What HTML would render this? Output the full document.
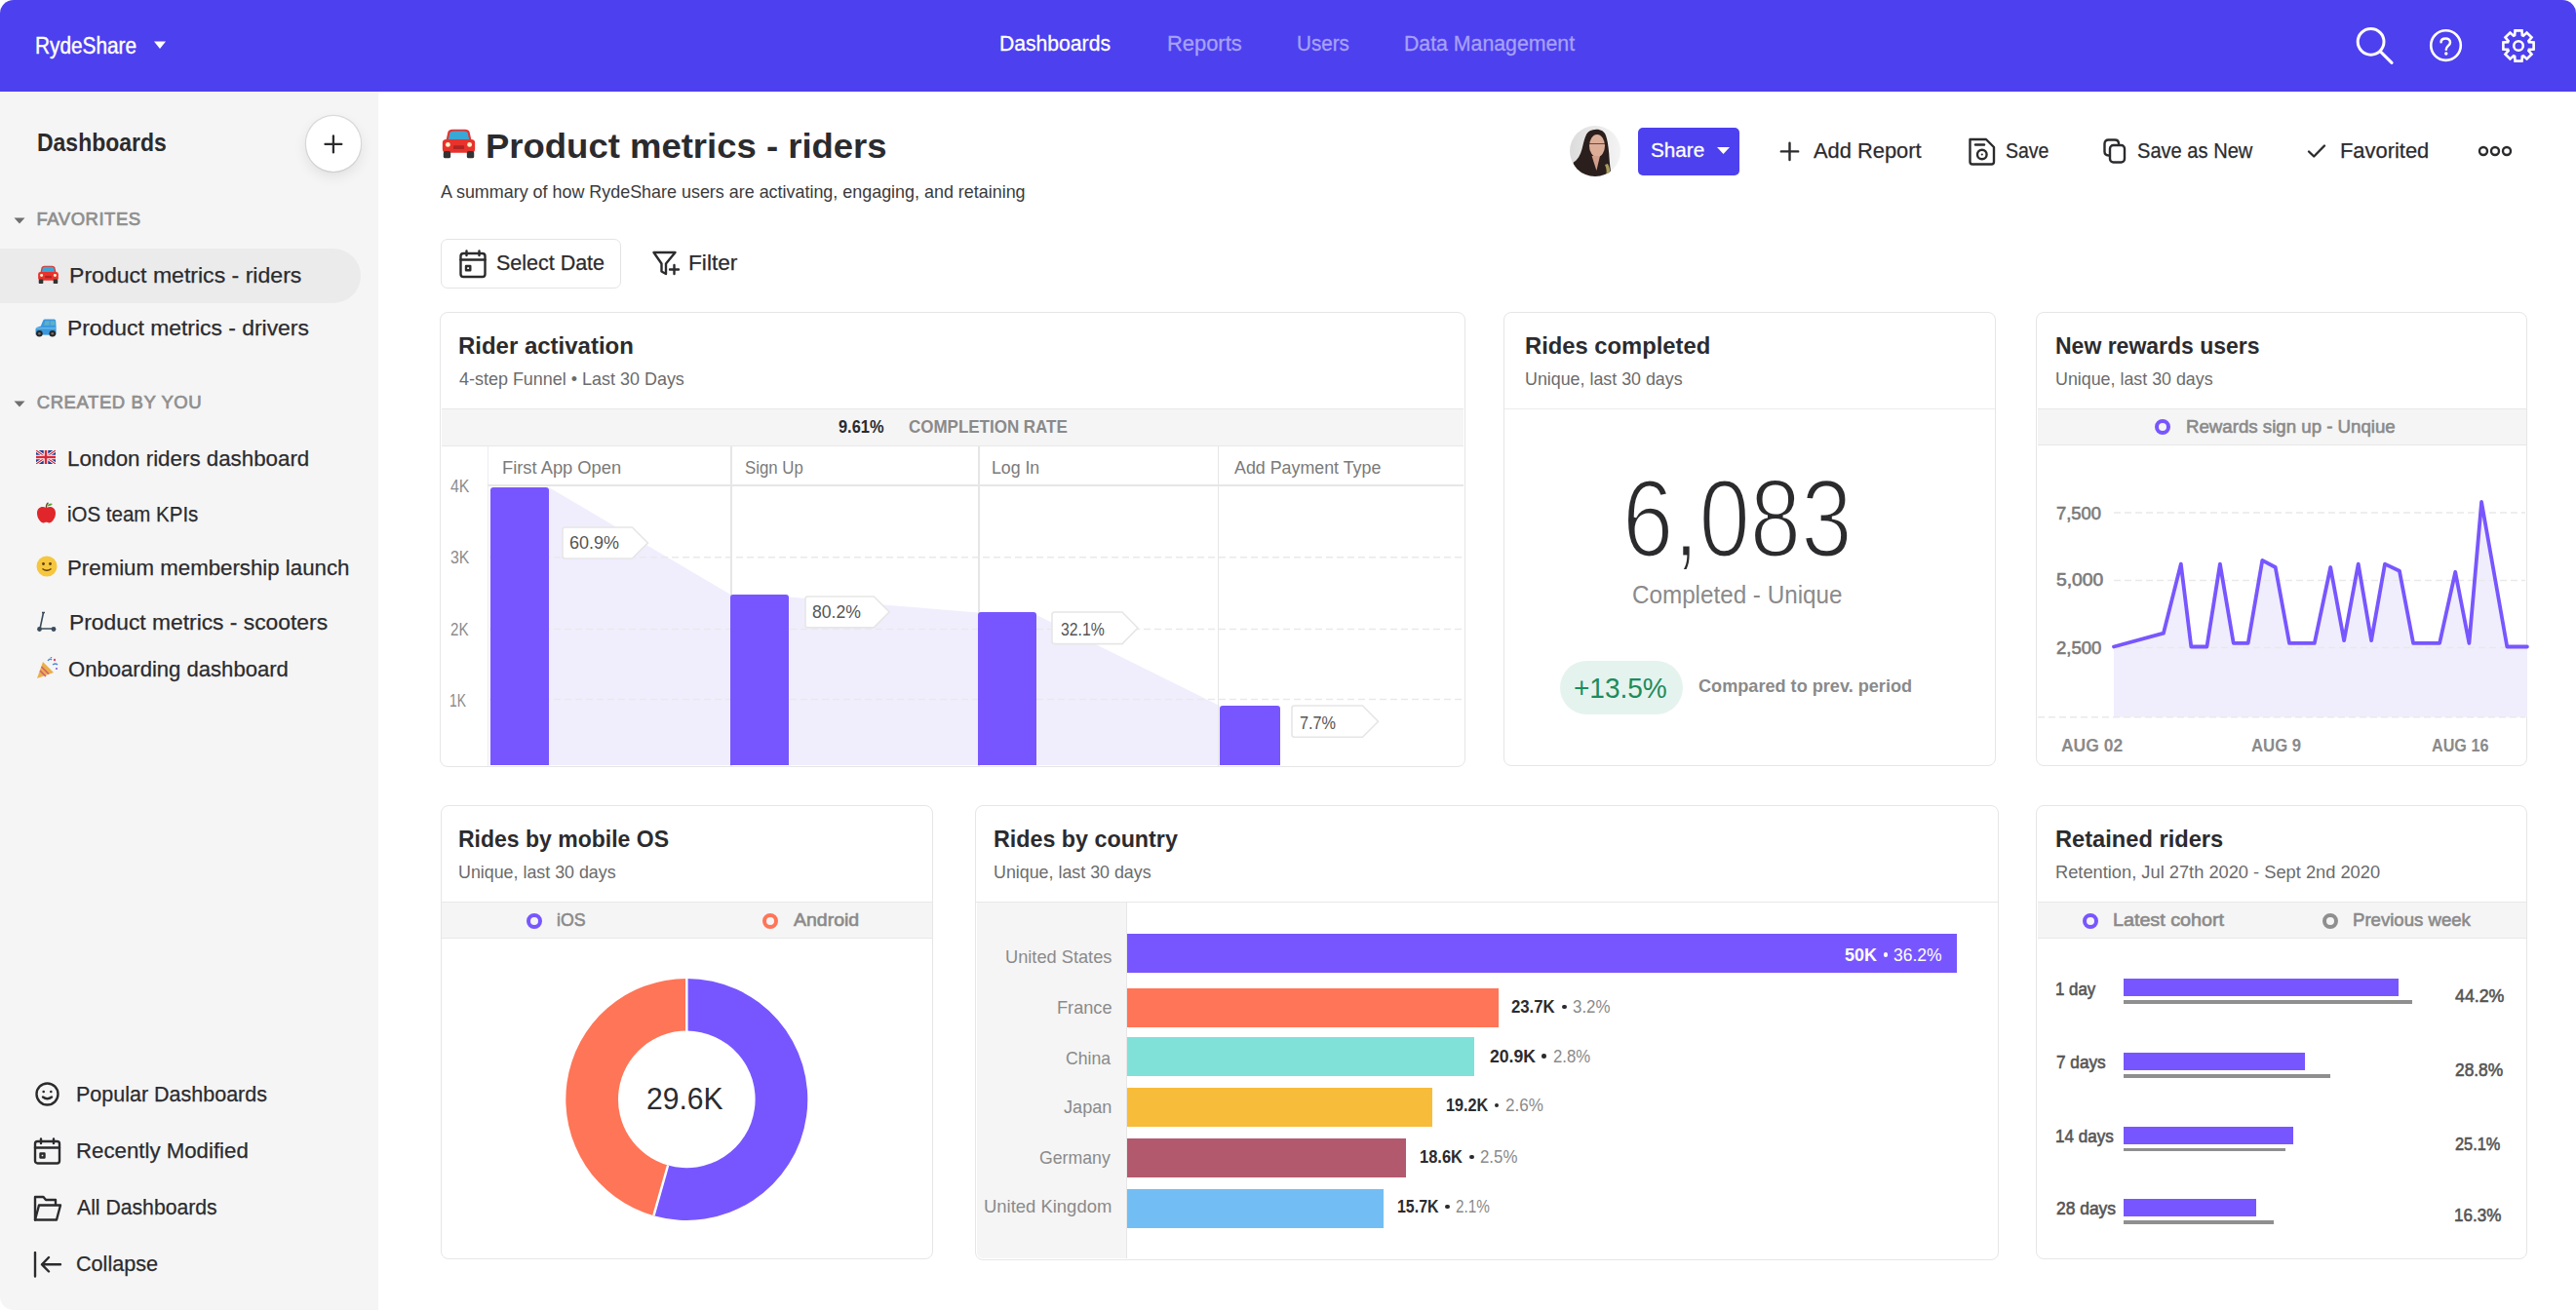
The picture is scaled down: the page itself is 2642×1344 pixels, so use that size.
<!DOCTYPE html>
<html><head><meta charset="utf-8"><style>
html,body{margin:0;padding:0;}
body{width:2642px;height:1344px;position:relative;overflow:hidden;background:#fff;font-family:"Liberation Sans",sans-serif;}
.t{position:absolute;white-space:pre;}
.a{position:absolute;}
</style></head><body>
<div class="a" style="left:0;top:0;width:2642px;height:93.5px;background:#4d40ef;border-radius:14px 14px 0 0;"></div><div class="a" style="left:0;top:93.5px;width:387.5px;height:1250.5px;background:#f5f5f5;border-radius:0 0 0 14px;"></div><svg class="a" style="left:157px;top:41px" width="14" height="10"><path d="M1 1.5 L13 1.5 L7 9 Z" fill="#fff"/></svg><svg class="a" style="left:2410px;top:22px" width="50" height="48" viewBox="0 0 50 48"><circle cx="21.6" cy="20.8" r="13.4" fill="none" stroke="#fff" stroke-width="3"/><line x1="31.4" y1="30.8" x2="43" y2="42.4" stroke="#fff" stroke-width="3.2" stroke-linecap="round"/></svg><svg class="a" style="left:2486px;top:27px" width="42" height="40" viewBox="0 0 42 40"><circle cx="22.5" cy="19.6" r="15.3" fill="none" stroke="#fff" stroke-width="2.6"/><path d="M17.6 16.2 C17.6 13.6 19.6 12.4 22.3 12.4 C25 12.4 27 14 27 16.4 C27 19.6 22.8 20.2 22.8 23.8" fill="none" stroke="#fff" stroke-width="2.5" stroke-linecap="round"/><circle cx="22.8" cy="28" r="1.7" fill="#fff"/></svg><svg class="a" style="left:2560px;top:24px" width="46" height="46" viewBox="0 0 46 46"><path d="M19.16 12.16 L19.51 7.39 L26.49 7.39 L26.84 12.16 L27.95 12.62 L31.57 9.49 L36.51 14.43 L33.38 18.05 L33.84 19.16 L38.61 19.51 L38.61 26.49 L33.84 26.84 L33.38 27.95 L36.51 31.57 L31.57 36.51 L27.95 33.38 L26.84 33.84 L26.49 38.61 L19.51 38.61 L19.16 33.84 L18.05 33.38 L14.43 36.51 L9.49 31.57 L12.62 27.95 L12.16 26.84 L7.39 26.49 L7.39 19.51 L12.16 19.16 L12.62 18.05 L9.49 14.43 L14.43 9.49 L18.05 12.62 Z" fill="none" stroke="#fff" stroke-width="2.6" stroke-linejoin="miter"/><circle cx="23" cy="23" r="4.8" fill="none" stroke="#fff" stroke-width="2.6"/></svg><div class="a" style="left:313.5px;top:119.3px;width:56.8px;height:56.8px;border-radius:50%;background:#fff;box-shadow:0 5px 14px rgba(0,0,0,0.09),0 0 0 1.2px rgba(0,0,0,0.09);"></div><svg class="a" style="left:332px;top:138px" width="20" height="20"><path d="M9.9 1.4 V18.4 M1.5 9.9 H18.3" stroke="#2b2b2e" stroke-width="2.3" stroke-linecap="round"/></svg><svg class="a" style="left:14px;top:223px" width="12" height="7"><path d="M0.5 0.5 H11.5 L6 6.5 Z" fill="#6f6f6f"/></svg><svg class="a" style="left:14px;top:411px" width="12" height="7"><path d="M0.5 0.5 H11.5 L6 6.5 Z" fill="#6f6f6f"/></svg><div class="a" style="left:0;top:254.7px;width:370px;height:56px;background:#ebebeb;border-radius:0 28px 28px 0;"></div><svg class="a" style="left:37.5px;top:271.5px" width="23" height="19.8" viewBox="0 0 40 34"><path d="M8 4 Q9 1 13 1 H27 Q31 1 32 4 L34 13 H6 Z" fill="#e8322c"/><path d="M10 5 Q11 3 14 3 H26 Q29 3 30 5 L31.5 12 H8.5 Z" fill="#39a8d6"/><rect x="2" y="12" width="36" height="15" rx="4" fill="#e8322c"/><rect x="3" y="25" width="8" height="8" rx="2" fill="#333"/><rect x="29" y="25" width="8" height="8" rx="2" fill="#333"/><circle cx="8" cy="18" r="2.6" fill="#fff6cc"/><circle cx="32" cy="18" r="2.6" fill="#fff6cc"/><rect x="14" y="19" width="12" height="4" rx="1" fill="#8a1c1c" opacity="0.6"/></svg><svg class="a" style="left:36px;top:326.5px" width="22" height="19" viewBox="0 0 22 19"><path d="M0.5 16.5 V11 Q0.5 9.3 2 8.8 L5.8 7.5 L8.2 1.8 Q8.7 0.5 10.2 0.5 H19.6 Q21 0.5 21.2 2 L21.6 8.5 V15.5 Q21.6 16.8 20.2 16.8 Z" fill="#3a98de"/><path d="M9 6.8 L10.4 2.2 H14.6 V6.8 Z M15.6 2.2 H20.2 L20.4 6.8 H15.6 Z" fill="#5fb0c8"/><path d="M1 9.8 H21" stroke="#7fd3f2" stroke-width="0.8"/><circle cx="4.4" cy="15.3" r="3.3" fill="#262626"/><circle cx="4.4" cy="15.3" r="1.3" fill="#7a7070"/><circle cx="17.8" cy="15.3" r="3.3" fill="#262626"/><circle cx="17.8" cy="15.3" r="1.3" fill="#7a7070"/></svg><svg class="a" style="left:37px;top:462px" width="20" height="14" viewBox="0 0 20 14"><rect width="20" height="14" rx="1.5" fill="#1f3f8f"/><path d="M0 0 L20 14 M20 0 L0 14" stroke="#fff" stroke-width="3"/><path d="M0 0 L20 14 M20 0 L0 14" stroke="#d8283a" stroke-width="1.2"/><path d="M10 0 V14 M0 7 H20" stroke="#fff" stroke-width="4.5"/><path d="M10 0 V14 M0 7 H20" stroke="#d8283a" stroke-width="2.5"/></svg><svg class="a" style="left:37px;top:515px" width="21" height="22" viewBox="0 0 21 22"><path d="M10.5 6 C6 3.5 1 5.5 1 11.5 C1 17 5 21.5 7.5 21.5 C9 21.5 9.5 20.8 10.5 20.8 C11.5 20.8 12 21.5 13.5 21.5 C16 21.5 20 17 20 11.5 C20 5.5 15 3.5 10.5 6 Z" fill="#e0262b"/><path d="M10.5 6 Q10 2.5 12.5 0.8" stroke="#6b4a2a" stroke-width="1.3" fill="none"/><path d="M11 4 Q14 0.5 17 2 Q14.5 5 11 4 Z" fill="#5aa635"/></svg><svg class="a" style="left:36.5px;top:570px" width="22" height="22" viewBox="0 0 22 22"><circle cx="11" cy="11" r="10.5" fill="#f6c63d"/><circle cx="7.5" cy="8.5" r="1.4" fill="#5a3b10"/><circle cx="14.5" cy="8.5" r="1.4" fill="#5a3b10"/><path d="M6.5 13.5 Q11 17 15.5 13.5" stroke="#5a3b10" stroke-width="1.3" fill="none"/></svg><svg class="a" style="left:37px;top:627px" width="22" height="22" viewBox="0 0 22 22"><path d="M6 1.5 H9 M7.5 1.5 L4 18 H17" stroke="#3a4a5a" stroke-width="1.6" fill="none"/><circle cx="3.5" cy="18.5" r="2.4" fill="#3a4a5a"/><circle cx="18" cy="18.5" r="2.4" fill="#3a4a5a"/></svg><svg class="a" style="left:37px;top:674px" width="23" height="23" viewBox="0 0 23 23"><path d="M1 22 L7 5 L18 16 Z" fill="#e9b04a"/><path d="M4 14 L10 20 M5.5 10 L13 17.5" stroke="#d45b7a" stroke-width="1.5"/><path d="M12 4 Q14 1 16 3 M17 8 Q20 6 22 8 M15 1 L16 0" stroke="#4a8ad8" stroke-width="1.3" fill="none"/><circle cx="19" cy="3" r="1.2" fill="#e24a6a"/><circle cx="21" cy="12" r="1.1" fill="#8a5ad8"/></svg><svg class="a" style="left:36px;top:1110px" width="26" height="26" viewBox="0 0 26 26"><circle cx="12.5" cy="12.5" r="11" fill="none" stroke="#2b2b2e" stroke-width="2.4" stroke-linecap="round" stroke-linejoin="round"/><circle cx="8.7" cy="10" r="1.3" fill="#2b2b2e"/><circle cx="16.3" cy="10" r="1.3" fill="#2b2b2e"/><path d="M8 15.5 Q12.5 19 17 15.5" fill="none" stroke="#2b2b2e" stroke-width="2.4" stroke-linecap="round" stroke-linejoin="round"/></svg><svg class="a" style="left:34px;top:1167px" width="30" height="30" viewBox="0 0 30 30"><rect x="2" y="4" width="25" height="22.5" rx="2.5" fill="none" stroke="#2b2b2e" stroke-width="2.4" stroke-linecap="round" stroke-linejoin="round"/><path d="M2 10.5 H27 M8 1.5 V6 M21 1.5 V6" fill="none" stroke="#2b2b2e" stroke-width="2.4" stroke-linecap="round" stroke-linejoin="round"/><rect x="7.5" y="16.5" width="4" height="4" fill="none" stroke="#2b2b2e" stroke-width="2.4" stroke-linecap="round" stroke-linejoin="round" stroke-width="1.8"/></svg><svg class="a" style="left:34px;top:1225px" width="30" height="30" viewBox="0 0 30 30"><path d="M2 26.5 V3 H10.5 L13 6 H23 V11" fill="none" stroke="#2b2b2e" stroke-width="2.4" stroke-linecap="round" stroke-linejoin="round"/><path d="M2 26.5 L6 11.5 H28 L24 26.5 Z" fill="none" stroke="#2b2b2e" stroke-width="2.4" stroke-linecap="round" stroke-linejoin="round"/></svg><svg class="a" style="left:33px;top:1284px" width="32" height="28" viewBox="0 0 32 28"><path d="M3 1 V25.5 M10 13.3 H29 M17 6 L10 13.3 L17 20.5" fill="none" stroke="#2b2b2e" stroke-width="2.4" stroke-linecap="round" stroke-linejoin="round"/></svg><svg class="a" style="left:452px;top:131px" width="37" height="33.0" viewBox="0 0 40 34"><path d="M8 4 Q9 1 13 1 H27 Q31 1 32 4 L34 13 H6 Z" fill="#e8322c"/><path d="M10 5 Q11 3 14 3 H26 Q29 3 30 5 L31.5 12 H8.5 Z" fill="#39a8d6"/><rect x="2" y="12" width="36" height="15" rx="4" fill="#e8322c"/><rect x="3" y="25" width="8" height="8" rx="2" fill="#333"/><rect x="29" y="25" width="8" height="8" rx="2" fill="#333"/><circle cx="8" cy="18" r="2.6" fill="#fff6cc"/><circle cx="32" cy="18" r="2.6" fill="#fff6cc"/><rect x="14" y="19" width="12" height="4" rx="1" fill="#8a1c1c" opacity="0.6"/></svg><div class="a" style="left:451.5px;top:244.5px;width:185.5px;height:51.5px;box-sizing:border-box;border:1.5px solid #e4e4e4;border-radius:7px;background:#fff;"></div><svg class="a" style="left:469px;top:255px" width="32" height="32" viewBox="0 0 32 32"><rect x="3.5" y="5" width="25" height="24" rx="2.8" fill="none" stroke="#2b2b2e" stroke-width="2.4" stroke-linecap="round" stroke-linejoin="round"/><path d="M3.5 11.5 H28.5 M9.5 2.5 V7 M22.5 2.5 V7" fill="none" stroke="#2b2b2e" stroke-width="2.4" stroke-linecap="round" stroke-linejoin="round"/><rect x="9" y="18" width="4.3" height="4.3" fill="none" stroke="#2b2b2e" stroke-width="2.4" stroke-linecap="round" stroke-linejoin="round" stroke-width="1.8"/></svg><svg class="a" style="left:668px;top:256px" width="32" height="28" viewBox="0 0 32 28"><path d="M2.5 3 H24.5 L15 14.5 V25 L10.5 22.5 V14.5 Z" fill="none" stroke="#2b2b2e" stroke-width="2.4" stroke-linecap="round" stroke-linejoin="round"/><path d="M23.5 16 V25 M19 20.5 H28" fill="none" stroke="#2b2b2e" stroke-width="2.4" stroke-linecap="round" stroke-linejoin="round"/></svg><svg class="a" style="left:1610px;top:129px" width="52" height="52" viewBox="0 0 52 52"><defs><clipPath id="av"><circle cx="26" cy="26" r="26"/></clipPath><linearGradient id="avg" x1="0" x2="1"><stop offset="0" stop-color="#dcdcdc"/><stop offset="1" stop-color="#f4f4f4"/></linearGradient></defs><g clip-path="url(#av)"><rect width="52" height="52" fill="url(#avg)"/><path d="M27.4 3.8 C22 4 18.5 6 17 9 C15 13 14 18 12.5 24 C11 30 8 35 3.4 38 L8 50 L25 54 L40 52 L42 47 C41 40 40.5 33 40.2 28 C39.5 20 38.5 14 37 10 C35.5 6 32 3.8 27.4 3.8 Z" fill="#2b1f1d"/><ellipse cx="28" cy="20.6" rx="8" ry="11.6" fill="#dcae98"/><path d="M22.6 31 L27.4 46 L31 31 Z" fill="#d2a08a"/><path d="M36 40 C38 44 38 48 37 52 L41 52 C42 47 41 43 39 39 Z" fill="#a89c5c"/><path d="M20 18.5 H36" stroke="#5a3a35" stroke-width="0.9"/></g></svg><div class="a" style="left:1679.5px;top:130.5px;width:104.5px;height:49.5px;background:#4d40ef;border-radius:5px;"></div><svg class="a" style="left:1760px;top:150px" width="15" height="9"><path d="M1 1 H14 L7.5 8 Z" fill="#fff"/></svg><svg class="a" style="left:1824px;top:144px" width="23" height="23" viewBox="0 0 23 23"><path d="M11.5 2.7 V20.1 M2.8 11.4 H20.2" fill="none" stroke="#2b2b2e" stroke-width="2.4" stroke-linecap="round" stroke-linejoin="round" stroke-width="2.5" stroke-linecap="butt"/></svg><svg class="a" style="left:2017px;top:139px" width="32" height="32" viewBox="0 0 32 32"><path d="M3.5 4 H20 L28 12 V27 Q28 29.5 25.5 29.5 H6 Q3.5 29.5 3.5 27 Z" fill="none" stroke="#2b2b2e" stroke-width="2.4" stroke-linecap="round" stroke-linejoin="round"/><path d="M9 9.5 H18" fill="none" stroke="#2b2b2e" stroke-width="2.4" stroke-linecap="round" stroke-linejoin="round"/><circle cx="15.8" cy="19.5" r="4.8" fill="none" stroke="#2b2b2e" stroke-width="2.4" stroke-linecap="round" stroke-linejoin="round"/><circle cx="15.8" cy="19.5" r="1.1" fill="#2b2b2e"/></svg><svg class="a" style="left:2156px;top:141px" width="28" height="28" viewBox="0 0 28 28"><path d="M6.5 18.5 Q2.5 18.5 2.5 14.5 V6.5 Q2.5 2.5 6.5 2.5 H13 Q17 2.5 17 6.5" fill="none" stroke="#2b2b2e" stroke-width="2.4" stroke-linecap="round" stroke-linejoin="round"/><rect x="8" y="8" width="15" height="17.5" rx="3.5" fill="none" stroke="#2b2b2e" stroke-width="2.4" stroke-linecap="round" stroke-linejoin="round"/></svg><svg class="a" style="left:2366px;top:147px" width="20" height="16" viewBox="0 0 20 16"><path d="M2 8.5 L7.2 13.5 L18 2.5" fill="none" stroke="#2b2b2e" stroke-width="2.4" stroke-linecap="round" stroke-linejoin="round"/></svg><svg class="a" style="left:2541px;top:148px" width="36" height="14" viewBox="0 0 36 14"><circle cx="6" cy="7" r="4" fill="none" stroke="#2b2b2e" stroke-width="2.4"/><circle cx="18" cy="7" r="4" fill="none" stroke="#2b2b2e" stroke-width="2.4"/><circle cx="30" cy="7" r="4" fill="none" stroke="#2b2b2e" stroke-width="2.4"/></svg><div class="a" style="left:451px;top:319.5px;width:1051.5px;height:467.5px;box-sizing:border-box;border:1.6px solid #e6e6e6;border-radius:8px;background:#fff;"></div><div class="a" style="left:452.5px;top:418.5px;width:1048.5px;height:39.0px;box-sizing:border-box;border-top:1.6px solid #e8e8e8;border-bottom:1.6px solid #e8e8e8;background:#f5f5f5;"></div><svg class="a" style="left:0;top:0" width="2642" height="1344"><polygon points="563,500 749.3,610 749.3,785 563,785" fill="#f0eefd"/><polygon points="809.2,612.5 1003.2,628.5 1003.2,785 809.2,785" fill="#f0eefd"/><polygon points="1063.2,631 1251.3,724.3 1251.3,785 1063.2,785" fill="#f0eefd"/><line x1="502" y1="571.8" x2="1500" y2="571.8" stroke="#e9e9e9" stroke-width="1.5" stroke-dasharray="7 4"/><line x1="502" y1="645.5" x2="1500" y2="645.5" stroke="#e9e9e9" stroke-width="1.5" stroke-dasharray="7 4"/><line x1="502" y1="717.6" x2="1500" y2="717.6" stroke="#e9e9e9" stroke-width="1.5" stroke-dasharray="7 4"/></svg><div class="a" style="left:499.5px;top:457.5px;width:1.5px;height:328.0px;background:#ececf0;"></div><div class="a" style="left:749px;top:457.5px;width:1.5px;height:328.0px;background:#e6e6e6;"></div><div class="a" style="left:1003px;top:457.5px;width:1.5px;height:328.0px;background:#e6e6e6;"></div><div class="a" style="left:1248.6px;top:457.5px;width:1.5px;height:328.0px;background:#e6e6e6;"></div><div class="a" style="left:500px;top:496.8px;width:1001px;height:1.8px;background:#e6e6e6;"></div><div class="a" style="left:503.4px;top:499.8px;width:59.60000000000002px;height:285.7px;background:#7856ff;border-radius:3px 3px 0 0;"></div><div class="a" style="left:749.3px;top:609.9px;width:59.90000000000009px;height:175.60000000000002px;background:#7856ff;border-radius:3px 3px 0 0;"></div><div class="a" style="left:1003.2px;top:628.3px;width:60.0px;height:157.20000000000005px;background:#7856ff;border-radius:3px 3px 0 0;"></div><div class="a" style="left:1251.3px;top:724.3px;width:61.700000000000045px;height:61.200000000000045px;background:#7856ff;border-radius:3px 3px 0 0;"></div><svg class="a" style="left:576.4px;top:539.6px" width="89.39999999999998" height="34.0"><path d="M1 3.5 Q1 1 3.5 1 H72.4 L88.4 17.0 L72.4 33.0 H3.5 Q1 33.0 1 30.5 Z" fill="#fff" stroke="#e6e6e6" stroke-width="1.6"/></svg><svg class="a" style="left:824.5px;top:610.7px" width="88.20000000000005" height="33.89999999999998"><path d="M1 3.5 Q1 1 3.5 1 H71.2 L87.2 16.9 L71.2 32.9 H3.5 Q1 32.9 1 30.4 Z" fill="#fff" stroke="#e6e6e6" stroke-width="1.6"/></svg><svg class="a" style="left:1078.4px;top:627.4px" width="89.89999999999986" height="34.60000000000002"><path d="M1 3.5 Q1 1 3.5 1 H72.9 L88.9 17.3 L72.9 33.6 H3.5 Q1 33.6 1 31.1 Z" fill="#fff" stroke="#e6e6e6" stroke-width="1.6"/></svg><svg class="a" style="left:1324.2px;top:723.3px" width="90.5" height="34.30000000000007"><path d="M1 3.5 Q1 1 3.5 1 H73.5 L89.5 17.2 L73.5 33.3 H3.5 Q1 33.3 1 30.8 Z" fill="#fff" stroke="#e6e6e6" stroke-width="1.6"/></svg><div class="a" style="left:1542px;top:319.5px;width:504.5px;height:466.5px;box-sizing:border-box;border:1.6px solid #e6e6e6;border-radius:8px;background:#fff;"></div><div class="a" style="left:1543px;top:418.8px;width:502.5px;height:1.5px;background:#ececec;"></div><div class="a" style="left:1600px;top:678.4px;width:125.6px;height:55px;border-radius:28px;background:#e5f3ee;"></div><div class="a" style="left:2088px;top:319.5px;width:504px;height:466.5px;box-sizing:border-box;border:1.6px solid #e6e6e6;border-radius:8px;background:#fff;"></div><div class="a" style="left:2089.5px;top:418.5px;width:501.5px;height:38.5px;box-sizing:border-box;border-top:1.6px solid #e8e8e8;border-bottom:1.6px solid #e8e8e8;background:#f5f5f5;"></div><div class="a" style="left:2209.8px;top:430px;width:16px;height:16px;box-sizing:border-box;border:4.2px solid #7856ff;border-radius:50%;"></div><svg class="a" style="left:0;top:0" width="2642" height="1344"><polygon points="2168.0,735.7 2168.0,663.5 2218.9,649.7 2236.8,578.6 2247.3,663.5 2263.4,663.5 2276.9,578.6 2290.7,659.8 2305.7,659.8 2320.3,574.9 2333.7,582.0 2348.0,659.8 2373.8,659.8 2390.2,582.0 2404.1,657.2 2418.7,578.6 2432.1,657.2 2446.0,578.6 2460.9,585.7 2475.1,659.8 2502.1,659.8 2518.2,586.8 2532.4,659.8 2545.1,515.0 2571.3,663.5 2591.9,663.5 2591.9,735.7" fill="#f0eefd"/><line x1="2168" y1="525.9" x2="2590" y2="525.9" stroke="#e9e9e9" stroke-width="1.5" stroke-dasharray="7 4"/><line x1="2168" y1="595.4" x2="2590" y2="595.4" stroke="#e9e9e9" stroke-width="1.5" stroke-dasharray="7 4"/><line x1="2168" y1="664.6" x2="2590" y2="664.6" stroke="#e9e9e9" stroke-width="1.5" stroke-dasharray="7 4"/><line x1="2090" y1="735.7" x2="2590" y2="735.7" stroke="#e9e9e9" stroke-width="1.5" stroke-dasharray="7 4"/><polyline points="2168.0,663.5 2218.9,649.7 2236.8,578.6 2247.3,663.5 2263.4,663.5 2276.9,578.6 2290.7,659.8 2305.7,659.8 2320.3,574.9 2333.7,582.0 2348.0,659.8 2373.8,659.8 2390.2,582.0 2404.1,657.2 2418.7,578.6 2432.1,657.2 2446.0,578.6 2460.9,585.7 2475.1,659.8 2502.1,659.8 2518.2,586.8 2532.4,659.8 2545.1,515.0 2571.3,663.5 2591.9,663.5" fill="none" stroke="#7856ff" stroke-width="3.8" stroke-linejoin="round" stroke-linecap="round"/></svg><div class="a" style="left:452px;top:825.5px;width:504.5px;height:466.0px;box-sizing:border-box;border:1.6px solid #e6e6e6;border-radius:8px;background:#fff;"></div><div class="a" style="left:453px;top:924.5px;width:502.5px;height:38.5px;box-sizing:border-box;border-top:1.6px solid #e8e8e8;border-bottom:1.6px solid #e8e8e8;background:#f5f5f5;"></div><div class="a" style="left:539.7px;top:936.7px;width:16px;height:16px;box-sizing:border-box;border:4.2px solid #7856ff;border-radius:50%;"></div><div class="a" style="left:781.7px;top:936.7px;width:16px;height:16px;box-sizing:border-box;border:4.2px solid #ff7557;border-radius:50%;"></div><svg class="a" style="left:0;top:0" width="2642" height="1344"><path d="M704.3 1003.9000000000001 A124 124 0 1 1 670.45 1247.19 L685.11 1195.53 A70.3 70.3 0 1 0 704.3 1057.6000000000001 Z" fill="#7856ff"/><path d="M670.45 1247.19 A124 124 0 0 1 704.3 1003.9000000000001 L704.3 1057.6000000000001 A70.3 70.3 0 0 0 685.11 1195.53 Z" fill="#ff7557"/><line x1="704.3" y1="1002.9000000000001" x2="704.3" y2="1058.6000000000001" stroke="#fff" stroke-width="2.5"/><line x1="670.45" y1="1247.19" x2="685.11" y2="1195.53" stroke="#fff" stroke-width="2.5"/></svg><div class="a" style="left:1000px;top:825.5px;width:1049.5px;height:467.0px;box-sizing:border-box;border:1.6px solid #e6e6e6;border-radius:8px;background:#fff;"></div><div class="a" style="left:1002px;top:925.5px;width:153px;height:365px;background:#f5f5f5;border-radius:0 0 0 6px;"></div><div class="a" style="left:1001px;top:924.5px;width:1047.5px;height:1.8px;background:#e8e8e8;"></div><div class="a" style="left:1154.5px;top:925.5px;width:1.5px;height:365.0px;background:#e6e6e6;"></div><div class="a" style="left:1156px;top:958.3px;width:850.8px;height:40px;background:#7856ff;"></div><div class="a" style="left:1156px;top:1014.4px;width:381.0px;height:40px;background:#ff7557;"></div><div class="a" style="left:1156px;top:1064.2px;width:356.1px;height:40px;background:#80e1d9;"></div><div class="a" style="left:1156px;top:1115.7px;width:312.5px;height:40px;background:#f8bc3b;"></div><div class="a" style="left:1156px;top:1168px;width:286.0px;height:40px;background:#b2596e;"></div><div class="a" style="left:1156px;top:1219.6px;width:262.7px;height:40px;background:#72bef4;"></div><div class="a" style="left:2088px;top:825.5px;width:504px;height:466.0px;box-sizing:border-box;border:1.6px solid #e6e6e6;border-radius:8px;background:#fff;"></div><div class="a" style="left:2089.5px;top:924.5px;width:501.5px;height:38.5px;box-sizing:border-box;border-top:1.6px solid #e8e8e8;border-bottom:1.6px solid #e8e8e8;background:#f5f5f5;"></div><div class="a" style="left:2136.1px;top:936.7px;width:16px;height:16px;box-sizing:border-box;border:4.2px solid #7856ff;border-radius:50%;"></div><div class="a" style="left:2382.1px;top:936.7px;width:16px;height:16px;box-sizing:border-box;border:4.2px solid #8f8f8f;border-radius:50%;"></div><div class="a" style="left:2177.7px;top:1004.2px;width:282.1px;height:17.8px;background:#7856ff;"></div><div class="a" style="left:2177.7px;top:1025.9px;width:296.3px;height:3.8px;background:#8f8f8f;"></div><div class="a" style="left:2177.7px;top:1080px;width:186.0px;height:17.8px;background:#7856ff;"></div><div class="a" style="left:2177.7px;top:1101.8px;width:212.2px;height:3.8px;background:#8f8f8f;"></div><div class="a" style="left:2177.7px;top:1155.8px;width:174.0px;height:17.8px;background:#7856ff;"></div><div class="a" style="left:2177.7px;top:1177.7px;width:166.1px;height:3.8px;background:#8f8f8f;"></div><div class="a" style="left:2177.7px;top:1229.8px;width:136.2px;height:17.8px;background:#7856ff;"></div><div class="a" style="left:2177.7px;top:1252.2px;width:154.2px;height:3.8px;background:#8f8f8f;"></div><div class="a" style="left:1931.5px;top:977.1px;width:4.6px;height:4.6px;border-radius:50%;background:#ffffff;"></div><div class="a" style="left:1602.0px;top:1030.8px;width:4.6px;height:4.6px;border-radius:50%;background:#2b2b2e;"></div><div class="a" style="left:1581.2px;top:1081.0px;width:4.6px;height:4.6px;border-radius:50%;background:#2b2b2e;"></div><div class="a" style="left:1532.7px;top:1131.8px;width:4.6px;height:4.6px;border-radius:50%;background:#2b2b2e;"></div><div class="a" style="left:1507.0px;top:1184.6px;width:4.6px;height:4.6px;border-radius:50%;background:#2b2b2e;"></div><div class="a" style="left:1482.2px;top:1235.5px;width:4.6px;height:4.6px;border-radius:50%;background:#2b2b2e;"></div>
<div class="t" style="top:36.00px;font-size:23px;line-height:23px;font-weight:400;color:#ffffff;left:35.60px;transform:scaleX(0.9049);transform-origin:0 0;-webkit-text-stroke:0.4px #fff;">RydeShare</div><div class="t" style="top:34.00px;font-size:22px;line-height:22px;font-weight:400;color:#ffffff;left:1025.44px;transform:scaleX(0.9607);transform-origin:0 0;-webkit-text-stroke:0.3px #fff;">Dashboards</div><div class="t" style="top:34.00px;font-size:22px;line-height:22px;font-weight:400;color:#a7a1f7;left:1197.00px;transform:scaleX(0.9956);transform-origin:0 0;-webkit-text-stroke:0.3px #a7a1f7;">Reports</div><div class="t" style="top:34.00px;font-size:22px;line-height:22px;font-weight:400;color:#a7a1f7;left:1330.06px;transform:scaleX(0.9389);transform-origin:0 0;-webkit-text-stroke:0.3px #a7a1f7;">Users</div><div class="t" style="top:34.00px;font-size:22px;line-height:22px;font-weight:400;color:#a7a1f7;left:1440.03px;transform:scaleX(0.9673);transform-origin:0 0;-webkit-text-stroke:0.3px #a7a1f7;">Data Management</div><div class="t" style="top:134.00px;font-size:25px;line-height:25px;font-weight:700;color:#2b2b2e;left:37.58px;transform:scaleX(0.9188);transform-origin:0 0;">Dashboards</div><div class="t" style="top:216.00px;font-size:18.5px;line-height:18.5px;font-weight:400;color:#8f8f8f;letter-spacing:0.523px;left:37.50px;-webkit-text-stroke:0.7px #8f8f8f;">FAVORITES</div><div class="t" style="top:272.00px;font-size:22px;line-height:22px;font-weight:400;color:#2b2b2e;left:70.95px;transform:scaleX(1.0482);transform-origin:0 0;-webkit-text-stroke:0.25px #2b2b2e;">Product metrics - riders</div><div class="t" style="top:326.00px;font-size:22px;line-height:22px;font-weight:400;color:#2b2b2e;left:69.16px;transform:scaleX(1.0397);transform-origin:0 0;-webkit-text-stroke:0.25px #2b2b2e;">Product metrics - drivers</div><div class="t" style="top:404.00px;font-size:18.5px;line-height:18.5px;font-weight:400;color:#8f8f8f;letter-spacing:0.584px;left:37.70px;-webkit-text-stroke:0.7px #8f8f8f;">CREATED BY YOU</div><div class="t" style="top:460.00px;font-size:22px;line-height:22px;font-weight:400;color:#2b2b2e;left:68.59px;transform:scaleX(1.0149);transform-origin:0 0;-webkit-text-stroke:0.25px #2b2b2e;">London riders dashboard</div><div class="t" style="top:517.00px;font-size:22px;line-height:22px;font-weight:400;color:#2b2b2e;left:68.67px;transform:scaleX(0.9311);transform-origin:0 0;-webkit-text-stroke:0.25px #2b2b2e;">iOS team KPIs</div><div class="t" style="top:572.00px;font-size:22px;line-height:22px;font-weight:400;color:#2b2b2e;left:68.59px;transform:scaleX(1.0117);transform-origin:0 0;-webkit-text-stroke:0.25px #2b2b2e;">Premium membership launch</div><div class="t" style="top:628.00px;font-size:22px;line-height:22px;font-weight:400;color:#2b2b2e;left:70.96px;transform:scaleX(1.0373);transform-origin:0 0;-webkit-text-stroke:0.25px #2b2b2e;">Product metrics - scooters</div><div class="t" style="top:676.00px;font-size:22px;line-height:22px;font-weight:400;color:#2b2b2e;left:70.40px;transform:scaleX(1.0035);transform-origin:0 0;-webkit-text-stroke:0.25px #2b2b2e;">Onboarding dashboard</div><div class="t" style="top:1112.00px;font-size:22px;line-height:22px;font-weight:400;color:#2b2b2e;left:78.02px;transform:scaleX(0.9771);transform-origin:0 0;-webkit-text-stroke:0.25px #2b2b2e;">Popular Dashboards</div><div class="t" style="top:1170.00px;font-size:22px;line-height:22px;font-weight:400;color:#2b2b2e;left:77.99px;transform:scaleX(1.0109);transform-origin:0 0;-webkit-text-stroke:0.25px #2b2b2e;">Recently Modified</div><div class="t" style="top:1228.00px;font-size:22px;line-height:22px;font-weight:400;color:#2b2b2e;left:79.00px;transform:scaleX(0.9632);transform-origin:0 0;-webkit-text-stroke:0.25px #2b2b2e;">All Dashboards</div><div class="t" style="top:1286.00px;font-size:22px;line-height:22px;font-weight:400;color:#2b2b2e;left:78.02px;transform:scaleX(0.9814);transform-origin:0 0;-webkit-text-stroke:0.25px #2b2b2e;">Collapse</div><div class="t" style="top:132.00px;font-size:35px;line-height:35px;font-weight:700;color:#2b2b2e;left:497.92px;transform:scaleX(1.0424);transform-origin:0 0;">Product metrics - riders</div><div class="t" style="top:187.00px;font-size:19px;line-height:19px;font-weight:400;color:#3a3a3c;left:452.00px;transform:scaleX(0.9430);transform-origin:0 0;">A summary of how RydeShare users are activating, engaging, and retaining</div><div class="t" style="top:259.00px;font-size:22px;line-height:22px;font-weight:400;color:#2b2b2e;left:508.62px;transform:scaleX(0.9761);transform-origin:0 0;-webkit-text-stroke:0.25px #2b2b2e;">Select Date</div><div class="t" style="top:259.00px;font-size:22px;line-height:22px;font-weight:400;color:#2b2b2e;left:705.97px;transform:scaleX(1.0302);transform-origin:0 0;-webkit-text-stroke:0.25px #2b2b2e;">Filter</div><div class="t" style="top:143.00px;font-size:21px;line-height:21px;font-weight:400;color:#ffffff;left:1692.50px;transform:scaleX(0.9845);transform-origin:0 0;-webkit-text-stroke:0.3px #fff;">Share</div><div class="t" style="top:144.00px;font-size:22px;line-height:22px;font-weight:400;color:#2b2b2e;left:1859.50px;transform:scaleX(0.9939);transform-origin:0 0;-webkit-text-stroke:0.25px #2b2b2e;">Add Report</div><div class="t" style="top:144.00px;font-size:22px;line-height:22px;font-weight:400;color:#2b2b2e;left:2056.51px;transform:scaleX(0.8853);transform-origin:0 0;-webkit-text-stroke:0.25px #2b2b2e;">Save</div><div class="t" style="top:144.00px;font-size:22px;line-height:22px;font-weight:400;color:#2b2b2e;left:2192.09px;transform:scaleX(0.9128);transform-origin:0 0;-webkit-text-stroke:0.25px #2b2b2e;">Save as New</div><div class="t" style="top:144.00px;font-size:22px;line-height:22px;font-weight:400;color:#2b2b2e;left:2400.01px;transform:scaleX(0.9947);transform-origin:0 0;-webkit-text-stroke:0.25px #2b2b2e;">Favorited</div><div class="t" style="top:343.00px;font-size:24px;line-height:24px;font-weight:700;color:#2b2b2e;left:470.40px;transform:scaleX(0.9990);transform-origin:0 0;">Rider activation</div><div class="t" style="top:380.00px;font-size:18.5px;line-height:18.5px;font-weight:400;color:#6b6b6b;left:471.40px;transform:scaleX(0.9705);transform-origin:0 0;">4-step Funnel • Last 30 Days</div><div class="t" style="top:428.00px;font-size:19px;line-height:19px;font-weight:700;color:#2b2b2e;left:860.40px;transform:scaleX(0.8633);transform-origin:0 0;">9.61%</div><div class="t" style="top:428.00px;font-size:19px;line-height:19px;font-weight:700;color:#8a8a8a;left:931.50px;transform:scaleX(0.8933);transform-origin:0 0;">COMPLETION RATE</div><div class="t" style="top:471.00px;font-size:18.7px;line-height:18.7px;font-weight:400;color:#7a7a7a;left:514.72px;transform:scaleX(0.9800);transform-origin:0 0;">First App Open</div><div class="t" style="top:471.00px;font-size:18.7px;line-height:18.7px;font-weight:400;color:#7a7a7a;left:763.80px;transform:scaleX(0.8988);transform-origin:0 0;">Sign Up</div><div class="t" style="top:471.00px;font-size:18.7px;line-height:18.7px;font-weight:400;color:#7a7a7a;left:1016.75px;transform:scaleX(0.9473);transform-origin:0 0;">Log In</div><div class="t" style="top:471.00px;font-size:18.7px;line-height:18.7px;font-weight:400;color:#7a7a7a;left:1265.60px;transform:scaleX(0.9543);transform-origin:0 0;">Add Payment Type</div><div class="t" style="top:490.00px;font-size:18px;line-height:18px;font-weight:400;color:#8c8c8c;left:462.00px;transform:scaleX(0.8814);transform-origin:0 0;">4K</div><div class="t" style="top:563.00px;font-size:18px;line-height:18px;font-weight:400;color:#8c8c8c;left:462.00px;transform:scaleX(0.8814);transform-origin:0 0;">3K</div><div class="t" style="top:637.00px;font-size:18px;line-height:18px;font-weight:400;color:#8c8c8c;left:462.00px;transform:scaleX(0.8405);transform-origin:0 0;">2K</div><div class="t" style="top:710.00px;font-size:18px;line-height:18px;font-weight:400;color:#8c8c8c;left:461.23px;transform:scaleX(0.7710);transform-origin:0 0;">1K</div><div class="t" style="top:548.00px;font-size:18.5px;line-height:18.5px;font-weight:400;color:#555555;left:584.40px;transform:scaleX(0.9730);transform-origin:0 0;">60.9%</div><div class="t" style="top:619.00px;font-size:18.5px;line-height:18.5px;font-weight:400;color:#555555;left:833.00px;transform:scaleX(0.9518);transform-origin:0 0;">80.2%</div><div class="t" style="top:637.00px;font-size:18.5px;line-height:18.5px;font-weight:400;color:#555555;left:1087.60px;transform:scaleX(0.8537);transform-origin:0 0;">32.1%</div><div class="t" style="top:733.00px;font-size:18.5px;line-height:18.5px;font-weight:400;color:#555555;left:1332.80px;transform:scaleX(0.8797);transform-origin:0 0;">7.7%</div><div class="t" style="top:343.00px;font-size:24px;line-height:24px;font-weight:700;color:#2b2b2e;left:1563.81px;transform:scaleX(0.9901);transform-origin:0 0;">Rides completed</div><div class="t" style="top:380.00px;font-size:18.5px;line-height:18.5px;font-weight:400;color:#6b6b6b;left:1563.84px;transform:scaleX(0.9641);transform-origin:0 0;">Unique, last 30 days</div><div class="t" style="top:476.00px;font-size:113px;line-height:113px;font-weight:400;color:#2b2b2e;left:1664.14px;transform:scaleX(0.8328);transform-origin:0 0;-webkit-text-stroke:3px #fff;paint-order:fill stroke;">6,083</div><div class="t" style="top:598.00px;font-size:25.5px;line-height:25.5px;font-weight:400;color:#8a8a8a;left:1673.75px;transform:scaleX(0.9499);transform-origin:0 0;">Completed - Unique</div><div class="t" style="top:691.00px;font-size:30px;line-height:30px;font-weight:400;color:#1c8c5e;left:1614.37px;transform:scaleX(0.9335);transform-origin:0 0;">+13.5%</div><div class="t" style="top:694.00px;font-size:19px;line-height:19px;font-weight:700;color:#8a8a8a;left:1742.40px;transform:scaleX(0.9534);transform-origin:0 0;">Compared to prev. period</div><div class="t" style="top:343.00px;font-size:24px;line-height:24px;font-weight:700;color:#2b2b2e;left:2108.34px;transform:scaleX(0.9580);transform-origin:0 0;">New rewards users</div><div class="t" style="top:380.00px;font-size:18.5px;line-height:18.5px;font-weight:400;color:#6b6b6b;left:2108.34px;transform:scaleX(0.9641);transform-origin:0 0;">Unique, last 30 days</div><div class="t" style="top:428.00px;font-size:19px;line-height:19px;font-weight:400;color:#8a8a8a;left:2241.82px;transform:scaleX(0.9823);transform-origin:0 0;-webkit-text-stroke:0.6px #8a8a8a;">Rewards sign up - Unqiue</div><div class="t" style="top:518.00px;font-size:18.5px;line-height:18.5px;font-weight:400;color:#7a7a7a;left:2108.50px;transform:scaleX(0.9933);transform-origin:0 0;-webkit-text-stroke:0.6px #7a7a7a;">7,500</div><div class="t" style="top:586.00px;font-size:18.5px;line-height:18.5px;font-weight:400;color:#7a7a7a;left:2108.50px;transform:scaleX(1.0433);transform-origin:0 0;-webkit-text-stroke:0.6px #7a7a7a;">5,000</div><div class="t" style="top:656.00px;font-size:18.5px;line-height:18.5px;font-weight:400;color:#7a7a7a;left:2108.50px;transform:scaleX(0.9999);transform-origin:0 0;-webkit-text-stroke:0.6px #7a7a7a;">2,500</div><div class="t" style="top:755.00px;font-size:19px;line-height:19px;font-weight:700;color:#8a8a8a;left:2114.00px;transform:scaleX(0.9197);transform-origin:0 0;">AUG 02</div><div class="t" style="top:755.00px;font-size:19px;line-height:19px;font-weight:700;color:#8a8a8a;left:2309.40px;transform:scaleX(0.8800);transform-origin:0 0;">AUG 9</div><div class="t" style="top:755.00px;font-size:19px;line-height:19px;font-weight:700;color:#8a8a8a;left:2493.90px;transform:scaleX(0.8506);transform-origin:0 0;">AUG 16</div><div class="t" style="top:849.00px;font-size:24px;line-height:24px;font-weight:700;color:#2b2b2e;left:469.74px;transform:scaleX(0.9582);transform-origin:0 0;">Rides by mobile OS</div><div class="t" style="top:886.00px;font-size:18.5px;line-height:18.5px;font-weight:400;color:#6b6b6b;left:469.74px;transform:scaleX(0.9641);transform-origin:0 0;">Unique, last 30 days</div><div class="t" style="top:934.00px;font-size:19px;line-height:19px;font-weight:400;color:#8a8a8a;left:571.07px;transform:scaleX(0.9333);transform-origin:0 0;-webkit-text-stroke:0.6px #8a8a8a;">iOS</div><div class="t" style="top:934.00px;font-size:19px;line-height:19px;font-weight:400;color:#8a8a8a;left:814.00px;transform:scaleX(1.0258);transform-origin:0 0;-webkit-text-stroke:0.6px #8a8a8a;">Android</div><div class="t" style="top:1111.00px;font-size:32px;line-height:32px;font-weight:400;color:#2b2b2e;left:662.76px;transform:scaleX(0.9395);transform-origin:0 0;">29.6K</div><div class="t" style="top:849.00px;font-size:24px;line-height:24px;font-weight:700;color:#2b2b2e;left:1018.53px;transform:scaleX(0.9699);transform-origin:0 0;">Rides by country</div><div class="t" style="top:886.00px;font-size:18.5px;line-height:18.5px;font-weight:400;color:#6b6b6b;left:1018.54px;transform:scaleX(0.9641);transform-origin:0 0;">Unique, last 30 days</div><div class="t" style="top:972.00px;font-size:19px;line-height:19px;font-weight:400;color:#8a8a8a;left:1030.54px;transform:scaleX(0.9594);transform-origin:0 0;">United States</div><div class="t" style="top:1024.00px;font-size:19px;line-height:19px;font-weight:400;color:#8a8a8a;left:1083.54px;transform:scaleX(0.9554);transform-origin:0 0;">France</div><div class="t" style="top:1076.00px;font-size:19px;line-height:19px;font-weight:400;color:#8a8a8a;left:1093.10px;transform:scaleX(0.9266);transform-origin:0 0;">China</div><div class="t" style="top:1126.00px;font-size:19px;line-height:19px;font-weight:400;color:#8a8a8a;left:1090.70px;transform:scaleX(0.9531);transform-origin:0 0;">Japan</div><div class="t" style="top:1178.00px;font-size:19px;line-height:19px;font-weight:400;color:#8a8a8a;left:1066.30px;transform:scaleX(0.9309);transform-origin:0 0;">Germany</div><div class="t" style="top:1228.00px;font-size:19px;line-height:19px;font-weight:400;color:#8a8a8a;left:1009.03px;transform:scaleX(0.9710);transform-origin:0 0;">United Kingdom</div><div class="t" style="top:849.00px;font-size:24px;line-height:24px;font-weight:700;color:#2b2b2e;left:2108.31px;transform:scaleX(0.9857);transform-origin:0 0;">Retained riders</div><div class="t" style="top:886.00px;font-size:18.5px;line-height:18.5px;font-weight:400;color:#6b6b6b;left:2108.31px;transform:scaleX(0.9873);transform-origin:0 0;">Retention, Jul 27th 2020 - Sept 2nd 2020</div><div class="t" style="top:934.00px;font-size:19px;line-height:19px;font-weight:400;color:#8a8a8a;left:2167.36px;transform:scaleX(1.0377);transform-origin:0 0;-webkit-text-stroke:0.6px #8a8a8a;">Latest cohort</div><div class="t" style="top:934.00px;font-size:19px;line-height:19px;font-weight:400;color:#8a8a8a;left:2413.22px;transform:scaleX(0.9784);transform-origin:0 0;-webkit-text-stroke:0.6px #8a8a8a;">Previous week</div><div class="t" style="top:1005.00px;font-size:19px;line-height:19px;font-weight:400;color:#555555;left:2107.61px;transform:scaleX(0.8874);transform-origin:0 0;-webkit-text-stroke:0.6px #555555;">1 day</div><div class="t" style="top:1080.00px;font-size:19px;line-height:19px;font-weight:400;color:#555555;left:2108.50px;transform:scaleX(0.9048);transform-origin:0 0;-webkit-text-stroke:0.6px #555555;">7 days</div><div class="t" style="top:1156.00px;font-size:19px;line-height:19px;font-weight:400;color:#555555;left:2107.60px;transform:scaleX(0.8978);transform-origin:0 0;-webkit-text-stroke:0.6px #555555;">14 days</div><div class="t" style="top:1230.00px;font-size:19px;line-height:19px;font-weight:400;color:#555555;left:2108.50px;transform:scaleX(0.9175);transform-origin:0 0;-webkit-text-stroke:0.6px #555555;">28 days</div><div class="t" style="top:1012.00px;font-size:19px;line-height:19px;font-weight:400;color:#555555;left:2518.20px;transform:scaleX(0.9355);transform-origin:0 0;-webkit-text-stroke:0.6px #555555;">44.2%</div><div class="t" style="top:1088.00px;font-size:19px;line-height:19px;font-weight:400;color:#555555;left:2518.20px;transform:scaleX(0.9133);transform-origin:0 0;-webkit-text-stroke:0.6px #555555;">28.8%</div><div class="t" style="top:1164.00px;font-size:19px;line-height:19px;font-weight:400;color:#555555;left:2518.20px;transform:scaleX(0.8596);transform-origin:0 0;-webkit-text-stroke:0.6px #555555;">25.1%</div><div class="t" style="top:1237.00px;font-size:19px;line-height:19px;font-weight:400;color:#555555;left:2517.30px;transform:scaleX(0.8966);transform-origin:0 0;-webkit-text-stroke:0.6px #555555;">16.3%</div><div class="t" style="top:970.00px;font-size:19px;line-height:19px;font-weight:700;color:#ffffff;left:1892.10px;transform:scaleX(0.9450);transform-origin:0 0;">50K</div><div class="t" style="top:970.00px;font-size:19px;line-height:19px;font-weight:400;color:#ffffff;left:1941.80px;transform:scaleX(0.9207);transform-origin:0 0;">36.2%</div><div class="t" style="top:1023.00px;font-size:19px;line-height:19px;font-weight:700;color:#2b2b2e;left:1550.20px;transform:scaleX(0.8807);transform-origin:0 0;">23.7K</div><div class="t" style="top:1023.00px;font-size:19px;line-height:19px;font-weight:400;color:#8a8a8a;left:1612.90px;transform:scaleX(0.8891);transform-origin:0 0;">3.2%</div><div class="t" style="top:1074.00px;font-size:19px;line-height:19px;font-weight:700;color:#2b2b2e;left:1527.70px;transform:scaleX(0.9278);transform-origin:0 0;">20.9K</div><div class="t" style="top:1074.00px;font-size:19px;line-height:19px;font-weight:400;color:#8a8a8a;left:1592.80px;transform:scaleX(0.8822);transform-origin:0 0;">2.8%</div><div class="t" style="top:1124.00px;font-size:19px;line-height:19px;font-weight:700;color:#2b2b2e;left:1482.55px;transform:scaleX(0.8523);transform-origin:0 0;">19.2K</div><div class="t" style="top:1124.00px;font-size:19px;line-height:19px;font-weight:400;color:#8a8a8a;left:1543.80px;transform:scaleX(0.8984);transform-origin:0 0;">2.6%</div><div class="t" style="top:1177.00px;font-size:19px;line-height:19px;font-weight:700;color:#2b2b2e;left:1455.83px;transform:scaleX(0.8664);transform-origin:0 0;">18.6K</div><div class="t" style="top:1177.00px;font-size:19px;line-height:19px;font-weight:400;color:#8a8a8a;left:1517.50px;transform:scaleX(0.8868);transform-origin:0 0;">2.5%</div><div class="t" style="top:1228.00px;font-size:19px;line-height:19px;font-weight:700;color:#2b2b2e;left:1432.86px;transform:scaleX(0.8383);transform-origin:0 0;">15.7K</div><div class="t" style="top:1228.00px;font-size:19px;line-height:19px;font-weight:400;color:#8a8a8a;left:1493.40px;transform:scaleX(0.8062);transform-origin:0 0;">2.1%</div>
</body></html>
